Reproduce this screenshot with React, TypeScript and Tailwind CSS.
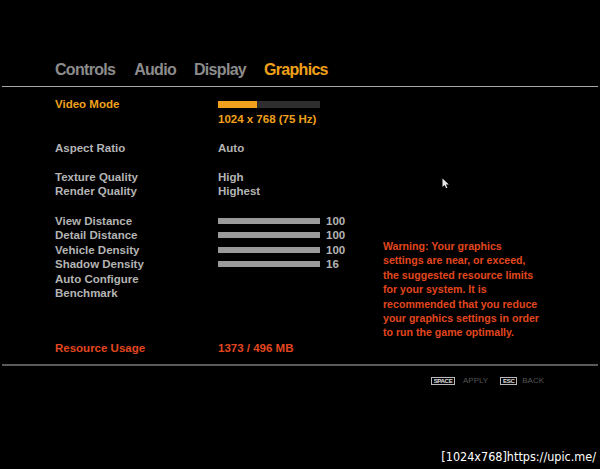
import React from "react";

const F = { fontFamily: '"Liberation Sans", Arial, sans-serif' };

function Bar({ value }: { value: string }) {
  return (
    <div className="flex items-center h-[14.5px]">
      <div className="w-[102px] h-[6px] bg-[#9a9a9a]" />
      <span className="ml-[6px]">{value}</span>
    </div>
  );
}

function Row({ label, children, cls = "" }: { label: string; children?: React.ReactNode; cls?: string }) {
  return (
    <div className={"flex " + cls}>
      <div className="w-[163px] h-[14.5px] leading-[14.5px]">{label}</div>
      <div className="leading-[14.5px]">{children}</div>
    </div>
  );
}

function Key({ k, w }: { k: string; w: string }) {
  return (
    <span className={"inline-flex items-center justify-center h-[8.5px] border border-[#b8b8b8] text-[6px] font-bold text-[#e0e0e0] leading-none tracking-[-0.3px] " + w}>
      {k}
    </span>
  );
}

export default function App() {
  return (
    <div className="relative w-[600px] h-[469px] bg-black overflow-hidden font-bold" style={F}>
      {/* tabs */}
      <div className="flex pl-[55px] pt-[59.5px] h-[79.5px] text-[16px] leading-[20px] tracking-[-0.7px] text-[#8c8c8c]">
        <span>Controls</span>
        <span className="ml-[19px]">Audio</span>
        <span className="ml-[18px]">Display</span>
        <span className="ml-[18px] text-[#f0a01c]">Graphics</span>
      </div>
      <div className="mt-[6.5px] mx-[2px] h-[1px] bg-[#a8a8a8]" />

      {/* main */}
      <div className="flex pl-[55px] pt-[10px] text-[11.5px] text-[#b4b4b4]">
        <div className="w-[328px] flex flex-col">
          <Row label="Video Mode" cls="text-[#f0a01c]">
            <div className="flex items-center h-[14.5px]">
              <div className="w-[102px] h-[7px] bg-[#2e2e2e] flex">
                <div className="w-[39px] h-full bg-[#f0a01c]" />
              </div>
            </div>
            <div>1024 x 768 (75 Hz)</div>
          </Row>
          <Row label="Aspect Ratio" cls="mt-[14.5px]">Auto</Row>
          <Row label="Texture Quality" cls="mt-[14.5px]">High</Row>
          <Row label="Render Quality">Highest</Row>
          <Row label="View Distance" cls="mt-[15px]"><Bar value="100" /></Row>
          <Row label="Detail Distance"><Bar value="100" /></Row>
          <Row label="Vehicle Density"><Bar value="100" /></Row>
          <Row label="Shadow Density"><Bar value="16" /></Row>
          <Row label="Auto Configure" />
          <Row label="Benchmark" />
          <Row label="Resource Usage" cls="mt-[40px] text-[#e2461e]">1373 / 496 MB</Row>
        </div>
        <div className="mt-[142px] text-[10.6px] leading-[14.4px] text-[#e2461e]">
          Warning: Your graphics<br />
          settings are near, or exceed,<br />
          the suggested resource limits<br />
          for your system. It is<br />
          recommended that you reduce<br />
          your graphics settings in order<br />
          to run the game optimally.
        </div>
      </div>

      <div className="mt-[8.5px] mx-[2px] h-[2px] bg-[#5a5a5a]" />

      {/* footer */}
      <div className="flex justify-end items-center pr-[56px] mt-[11px] h-[9px] text-[8px] font-normal text-[#555555]">
        <Key k="SPACE" w="w-[24px]" />
        <span className="ml-[8px]">APPLY</span>
        <span className="ml-[12px] flex"><Key k="ESC" w="w-[17px]" /></span>
        <span className="ml-[5px]">BACK</span>
      </div>

      {/* cursor */}
      <svg className="absolute left-[442px] top-[178px]" width="8" height="11" viewBox="0 0 8 11">
        <path d="M0.5 0.5 L0.5 9 L2.6 7 L4.2 10.3 L5.4 9.7 L3.9 6.6 L6.8 6.6 Z" fill="#e8e8e8" />
      </svg>

      {/* watermark */}
      <div
        className="absolute right-[3px] top-[449px] text-[12.5px] leading-[16px] font-normal text-white bg-black px-[1px]"
        style={{ fontFamily: '"DejaVu Sans Condensed", "DejaVu Sans", sans-serif' }}
      >
        [1024x768]https://upic.me/
      </div>
    </div>
  );
}
